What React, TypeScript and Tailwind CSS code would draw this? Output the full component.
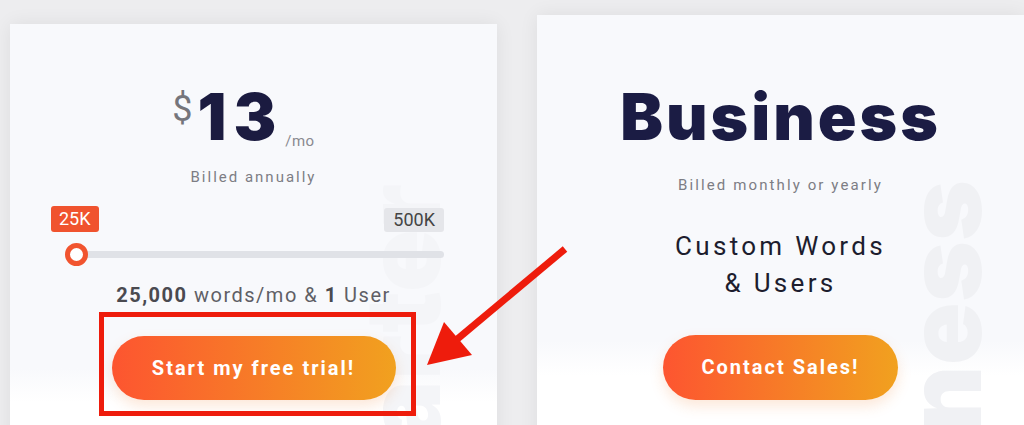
import { FC } from "react"

const body = "font-['Roboto','Liberation_Sans',sans-serif]"
const heavy = "font-['Inter','Liberation_Sans',sans-serif]"

const GradientButton: FC<{ label: string; width: string }> = ({ label, width }) => (
  <button
    className={`${width} h-[64px] rounded-full bg-[linear-gradient(90deg,#fd5530,#f1a11f)] text-white text-[20px] font-bold tracking-[2px] shadow-[0_6px_14px_rgba(240,120,40,0.18)] ${body}`}
  >
    {label}
  </button>
)

const Watermark: FC<{ text: string; className: string }> = ({ text, className }) => (
  <span
    className={`absolute [writing-mode:vertical-rl] rotate-180 text-[104px] leading-none font-black select-none ${heavy} ${className}`}
  >
    {text}
  </span>
)

const StarterCard: FC = () => (
  <div className="relative mt-[24px] ml-[10px] w-[487px] h-[430px] shrink-0 overflow-hidden bg-[linear-gradient(to_bottom,#f8f9fc_80%,#ffffff_88%)] shadow-[0_0_18px_rgba(0,0,0,0.07)] flex flex-col items-center">
    <Watermark text="Starter" className="top-[160px] left-[340px] text-[#f4f5f8]" />
    <div className="relative flex items-end pt-[61px] pr-[20px]">
      <span className={`text-[36px] leading-none text-[#75757b] self-start mt-[6px] mr-[5px] ${body}`}>$</span>
      <span className={`text-[64px] leading-none font-black text-[#1b1b40] tracking-[7px] ${heavy}`}>13</span>
      <span className={`text-[15px] text-[#8a8a90] ml-[2px] mb-[-3px] tracking-[0.5px] ${body}`}>/mo</span>
    </div>
    <p className={`relative mt-[17px] text-[15px] tracking-[2px] text-[#7d7d84] ${body}`}>Billed annually</p>
    <div className="relative w-full flex justify-between pl-[41px] pr-[53px] mt-[17px] items-end">
      <span className={`bg-[#f0532e] text-white text-[18px] leading-[26px] px-[8px] rounded-[3px] ${body}`}>25K</span>
      <span className={`bg-[#e5e6ea] text-[#444] text-[18px] leading-[24px] px-[9px] rounded-[3px] ${body}`}>500K</span>
    </div>
    <div className="relative w-full pl-[65px] pr-[53px] mt-[19px]">
      <div className="h-[7px] rounded-full bg-[#e0e2e7]" />
      <div className="absolute left-[55px] top-[-8px] w-[23px] h-[23px] rounded-full border-[5px] border-[#f1542f] bg-white" />
    </div>
    <p className={`relative mt-[25px] text-[20px] leading-[24px] tracking-[1.5px] text-[#5f5f66] ${body}`}>
      <b className="text-[#4a4a50]">25,000</b> words/mo &amp; <b className="text-[#4a4a50]">1</b> User
    </p>
    <div className="relative mt-[29px]">
      <GradientButton label="Start my free trial!" width="w-[284px]" />
    </div>
  </div>
)

const BusinessCard: FC = () => (
  <div className="relative mt-[15px] ml-[40px] w-[487px] h-[440px] shrink-0 overflow-hidden bg-[linear-gradient(to_bottom,#f8f9fc_74%,#ffffff_82%)] shadow-[0_0_18px_rgba(0,0,0,0.07)] flex flex-col items-center">
    <Watermark text="Business" className="top-[165px] left-[354px] text-[#f0f1f4]" />
    <h2 className={`relative mt-[70px] text-[64px] leading-none font-black tracking-[3px] text-[#1b1c44] ${heavy}`}>Business</h2>
    <p className={`relative mt-[25px] text-[15px] tracking-[2.1px] text-[#7d7d84] ${body}`}>Billed monthly or yearly</p>
    <p className={`relative mt-[31px] text-[26px] leading-[37px] tracking-[3.3px] text-[#1d1d2e] text-center ${body}`}>
      Custom Words
      <br />& Users
    </p>
    <div className="relative mt-[33px]">
      <GradientButton label="Contact Sales!" width="w-[235px] h-[65px]" />
    </div>
  </div>
)

const Annotation: FC = () => (
  <>
    <div className="absolute left-[99px] top-[312px] w-[317px] h-[104px] border-[5px] border-[#ee1c0c]" />
    <svg className="absolute left-0 top-0" width="1024" height="425" viewBox="0 0 1024 425">
      <line x1="565" y1="249" x2="455" y2="341" stroke="#ee1c0c" strokeWidth="7" />
      <polygon points="427,365 444,322 472,355" fill="#ee1c0c" />
    </svg>
  </>
)

const App: FC = () => {
  return (
    <div className="relative w-[1024px] h-[425px] overflow-hidden bg-[#ededef] flex items-start">
      <StarterCard />
      <BusinessCard />
      <Annotation />
    </div>
  )
}

export default App
